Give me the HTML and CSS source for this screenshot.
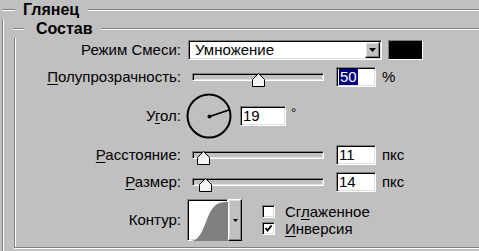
FILE: index.html
```html
<!DOCTYPE html>
<html lang="ru">
<head>
    <meta charset="UTF-8">
    <title>Глянец</title>
    <link rel="stylesheet" href="styles.css">
</head>
<body>
    <div class="group outer">
        <div class="group-title">
            <span class="line short-outer"></span>
            <span class="legend legend-outer">Глянец</span>
            <span class="line long"></span>
        </div>
        <div class="group-body outer-body">
            <div class="group inner">
                <div class="group-title">
                    <span class="line short-inner"></span>
                    <span class="legend legend-inner">Состав</span>
                    <span class="line long"></span>
                </div>
                <div class="group-body inner-body">
                    <div class="row row-mode">
                        <span class="lbl">Режим Смеси:</span>
                        <div class="select sunken">
                            <span class="select-text">Умножение</span>
                            <span class="btn raised select-btn">
                                <svg width="7" height="4" viewBox="0 0 7 4"><polygon points="0,0 7,0 3.5,4" fill="#000"/></svg>
                            </span>
                        </div>
                        <div class="swatch"></div>
                    </div>

                    <div class="row row-opacity">
                        <span class="lbl"><u>П</u>олупрозрачность:</span>
                        <div class="slider">
                            <div class="track"></div>
                            <svg class="thumb" style="left: 60px" width="13" height="14" viewBox="0 0 13 14"><polygon points="6.5,0.5 12.5,6.5 12.5,13.5 0.5,13.5 0.5,6.5" fill="#f4f4f4" stroke="#000"/></svg>
                        </div>
                        <div class="field sunken field-slider"><span class="selected">50</span></div>
                        <span class="unit">%</span>
                    </div>

                    <div class="row row-angle">
                        <span class="lbl">У<u>г</u>ол:</span>
                        <svg class="dial" width="46" height="46" viewBox="0 0 46 46">
                            <circle cx="23" cy="23" r="21.5" fill="none" stroke="#000" stroke-width="2"/>
                            <line x1="23.5" y1="23.5" x2="43" y2="17" stroke="#000" stroke-width="1.8"/>
                            <circle cx="23.5" cy="23.5" r="2" fill="#000"/>
                        </svg>
                        <div class="field sunken field-angle">19</div>
                        <span class="unit deg">°</span>
                    </div>

                    <div class="row row-distance">
                        <span class="lbl"><u>Р</u>асстояние:</span>
                        <div class="slider">
                            <div class="track"></div>
                            <svg class="thumb" style="left: 5px" width="13" height="14" viewBox="0 0 13 14"><polygon points="6.5,0.5 12.5,6.5 12.5,13.5 0.5,13.5 0.5,6.5" fill="#f4f4f4" stroke="#000"/></svg>
                        </div>
                        <div class="field sunken field-slider">11</div>
                        <span class="unit">пкс</span>
                    </div>

                    <div class="row row-size">
                        <span class="lbl"><u>Р</u>азмер:</span>
                        <div class="slider">
                            <div class="track"></div>
                            <svg class="thumb" style="left: 7px" width="13" height="14" viewBox="0 0 13 14"><polygon points="6.5,0.5 12.5,6.5 12.5,13.5 0.5,13.5 0.5,6.5" fill="#f4f4f4" stroke="#000"/></svg>
                        </div>
                        <div class="field sunken field-slider">14</div>
                        <span class="unit">пкс</span>
                    </div>

                    <div class="row row-contour">
                        <span class="lbl">Контур:</span>
                        <div class="contour">
                            <div class="contour-preview sunken">
                                <svg width="40" height="40" viewBox="0 0 40 40">
                                    <path d="M2,40 C9,40 13,31 17,21 C21,10 25,1 36,1 L40,1 L40,40 Z" fill="#808080"/>
                                </svg>
                            </div>
                            <span class="btn raised contour-btn">
                                <svg width="5" height="3" viewBox="0 0 5 3"><polygon points="0,0 5,0 2.5,3" fill="#000"/></svg>
                            </span>
                        </div>
                        <div class="checks">
                            <div class="check-row">
                                <span class="checkbox sunken"></span>
                                <span class="check-text">Сг<u>л</u>аженное</span>
                            </div>
                            <div class="check-row">
                                <span class="checkbox sunken">
                                    <svg width="9" height="9" viewBox="0 0 9 9"><polyline points="1.5,4 3.5,6.5 7.5,1.5" fill="none" stroke="#000" stroke-width="2"/></svg>
                                </span>
                                <span class="check-text"><u>И</u>нверсия</span>
                            </div>
                        </div>
                    </div>
                </div>
            </div>
        </div>
    </div>
</body>
</html>
```

FILE: styles.css
```css
body {
    margin: 0;
    width: 479px;
    height: 251px;
    overflow: hidden;
    background-color: #c0c0c0;
    font-family: "Liberation Sans", Arial, sans-serif;
    font-size: 15px;
    color: #000;
}
.outer {
    margin-left: 2px;
}
.group-title {
    display: flex;
    align-items: flex-start;
    height: 19px;
}
.line {
    margin-top: 9px;
    height: 0;
    border-top: 1px solid #808080;
    border-bottom: 1px solid #fff;
}
.short-outer {
    width: 13px;
}
.short-inner {
    width: 10px;
}
.long {
    flex: 1;
}
.legend {
    font-weight: bold;
    font-size: 16px;
    line-height: 19px;
}
.legend-outer {
    padding: 0 9px 0 8px;
}
.legend-inner {
    padding: 0 9px 0 12px;
}
.group-body {
    border-left: 1px solid #808080;
    box-shadow: inset 1px 0 0 #fff;
}
.outer-body {
    padding-left: 11px;
    height: 240px;
}
.inner-body {
    display: flex;
    flex-direction: column;
    padding: 2px 0 6px 0;
    border-bottom: 1px solid #808080;
    box-shadow: inset 1px 0 0 #fff, 0 1px 0 #fff;
}
.row {
    display: flex;
    align-items: center;
}
.row-opacity {
    margin-top: 7px;
}
.row-angle {
    margin-top: 6px;
}
.row-distance {
    margin-top: 6px;
}
.row-size {
    margin-top: 7px;
}
.row-contour {
    margin-top: 7px;
}
.lbl {
    width: 166px;
    text-align: right;
    line-height: 18px;
    white-space: nowrap;
}
u {
    text-decoration-thickness: 1px;
    text-underline-offset: 2px;
}
.sunken {
    box-sizing: border-box;
    border: 1px solid;
    border-color: #808080 #fff #fff #808080;
    box-shadow: inset 1px 1px 0 #000, inset -1px -1px 0 #dfdfdf;
    background-color: #fff;
}
.raised {
    box-sizing: border-box;
    border: 1px solid;
    border-color: #fff #000 #000 #fff;
    box-shadow: inset -1px -1px 0 #808080, inset 1px 1px 0 #dfdfdf;
    background-color: #c0c0c0;
}
.btn {
    display: flex;
    align-items: center;
    justify-content: center;
}
.select {
    margin-left: 7px;
    width: 194px;
    height: 20px;
    display: flex;
    align-items: center;
    padding: 1px;
}
.select-text {
    flex: 1;
    padding-left: 5px;
    line-height: 18px;
}
.select-btn {
    width: 15px;
    height: 16px;
}
.swatch {
    margin-left: 6px;
    width: 35px;
    height: 20px;
    box-sizing: border-box;
    border: 1px solid;
    border-color: #808080 #fff #fff #808080;
    background-color: #000;
}
.slider {
    position: relative;
    margin-left: 11px;
    width: 132px;
    height: 20px;
}
.track {
    margin-top: 6px;
    height: 8px;
    box-sizing: border-box;
    border: 1px solid;
    border-color: #808080 #fff #fff #808080;
    box-shadow: inset 1px 1px 0 #000, inset -1px -1px 0 #dfdfdf;
    background-color: #c0c0c0;
}
.thumb {
    position: absolute;
    top: 6px;
    display: block;
}
.field {
    height: 20px;
    padding-left: 2px;
    line-height: 18px;
}
.field-slider {
    margin-left: 12px;
    width: 40px;
}
.field-angle {
    margin-left: 8px;
    width: 46px;
}
.selected {
    display: inline-block;
    background-color: #000080;
    color: #fff;
    line-height: 16px;
    margin-top: 1px;
    padding: 0 1px;
}
.unit {
    margin-left: 6px;
    line-height: 18px;
}
.deg {
    margin-left: 5px;
    margin-top: 11px;
    align-self: flex-start;
    font-size: 13px;
}
.dial {
    display: block;
    margin-left: 5px;
}
.contour {
    margin-left: 6px;
    display: flex;
    height: 42px;
}
.contour-preview {
    width: 41px;
    height: 42px;
    padding: 1px 0 0 1px;
}
.contour-preview svg {
    display: block;
}
.contour-btn {
    width: 14px;
    height: 42px;
}
.checks {
    margin-left: 20px;
    display: flex;
    flex-direction: column;
}
.check-row {
    display: flex;
    align-items: center;
    height: 17px;
}
.checkbox {
    width: 13px;
    height: 13px;
    display: flex;
    align-items: center;
    justify-content: center;
}
.checkbox svg {
    display: block;
}
.check-text {
    margin-left: 10px;
    line-height: 17px;
}
```
